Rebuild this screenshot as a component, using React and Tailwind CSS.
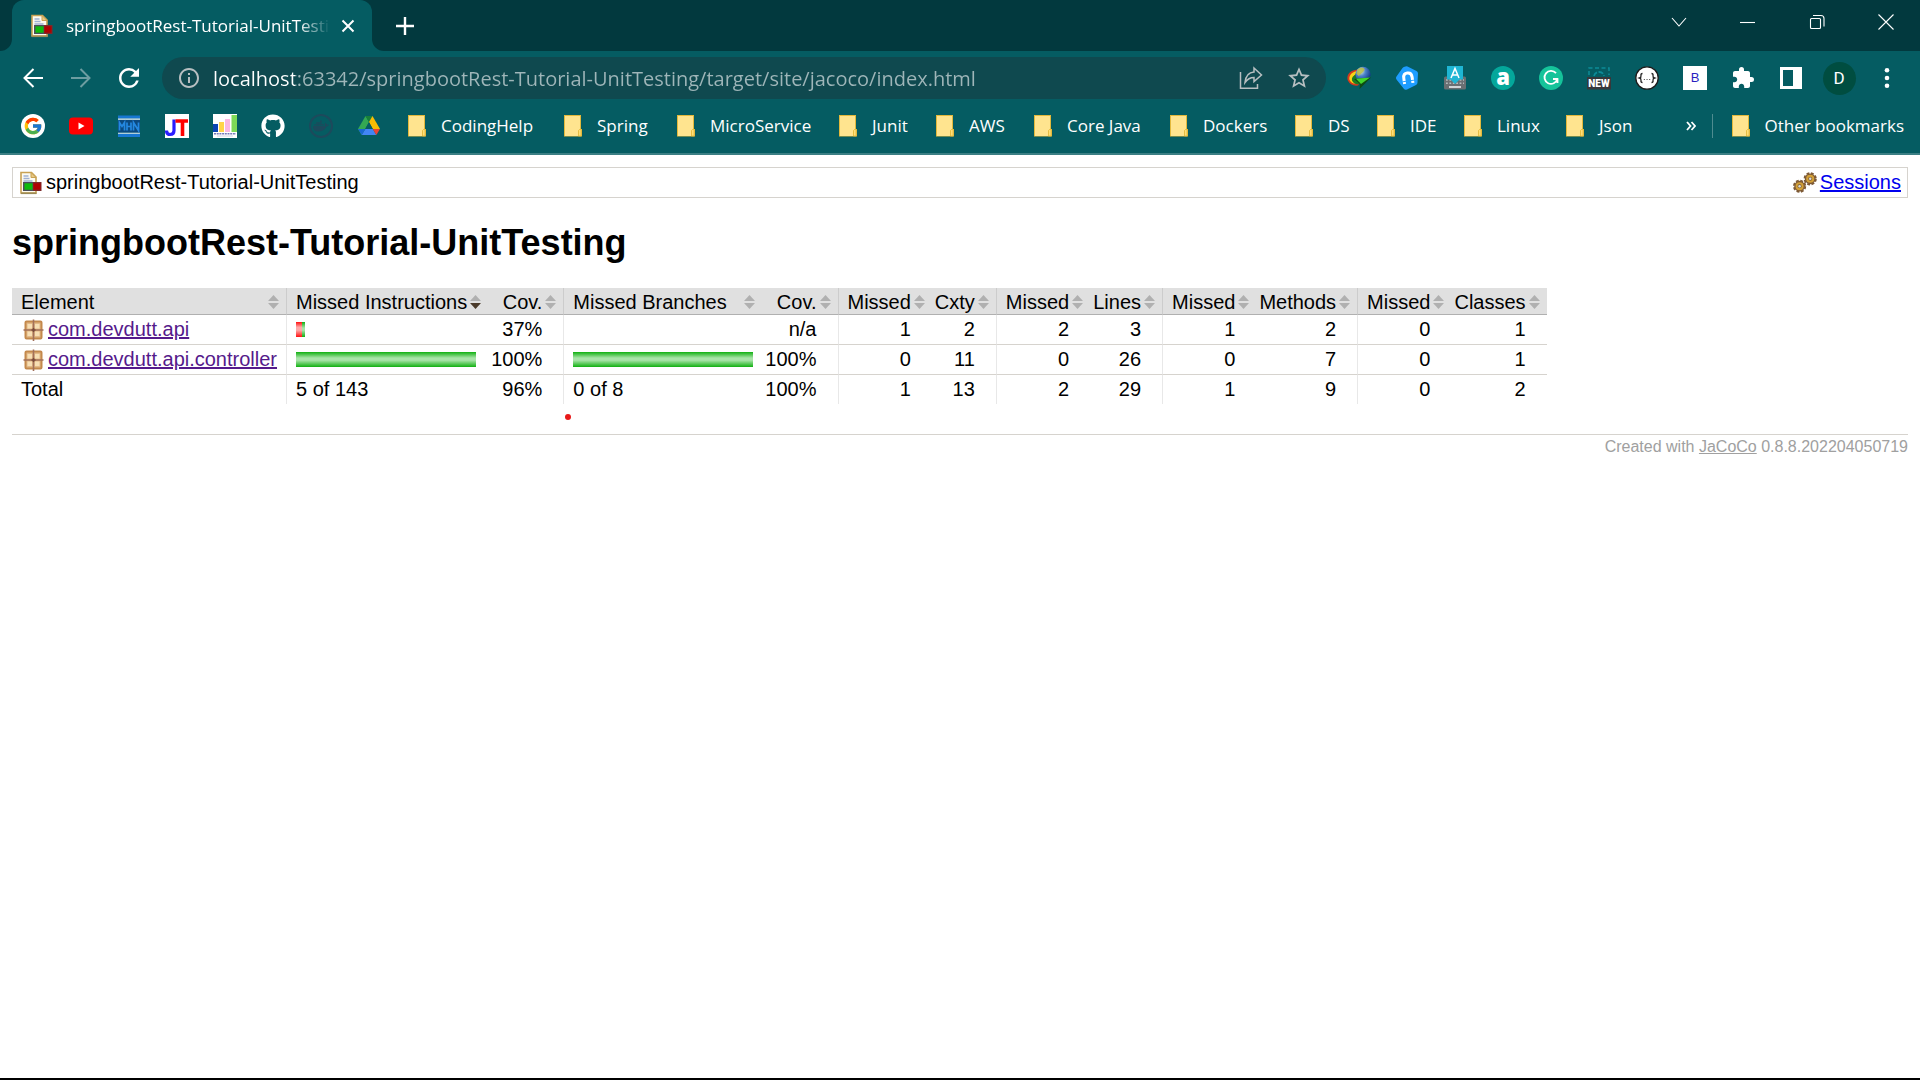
import { FaDocker, FaGithub } from "react-icons/fa";
import { FcGoogle } from "react-icons/fc";
import { MdExtension, MdInfoOutline, MdRefresh, MdStarBorder } from "react-icons/md";

/* ---------- icons ---------- */

function ReportIcon({ className }) {
  return (
    <svg viewBox="0 0 24 24" className={className} aria-hidden="true">
      <path d="M2 1.500h10.500l4.500 4.500v16H2z" fill="#fdfbf1" stroke="#c9a253" strokeWidth="1.600" />
      <path d="M12 1.500v5h5z" fill="#e9c983" stroke="#c9a253" strokeWidth="1" />
      <path d="M4.500 5h5M4.500 7.500h6M4.500 10h9" stroke="#9fb1d3" strokeWidth="1.300" />
      <path d="M2 22.300h15.500" stroke="#9b8a55" strokeWidth="1.600" />
      <rect x="4" y="11" width="10.500" height="9" fill="#4a4f5a" />
      <rect x="14" y="11" width="8.500" height="9" fill="#7d2a2a" />
      <rect x="5.500" y="12.300" width="8" height="6.400" fill="#0dbb0d" />
      <rect x="14.500" y="12.300" width="7" height="6.400" fill="#b00000" />
    </svg>
  );
}

function PackageIcon() {
  return (
    <svg viewBox="0 0 24 24" className="size-6 shrink-0" aria-hidden="true">
      <rect x="4.500" y="3.500" width="16" height="17" rx="1" fill="#e3b987" stroke="#c4894c" strokeWidth="2" />
      <path d="M6.500 6h4.500v4.500H6.500zM14 6h4.500v4.500H14zM6.500 13.500h4.500V18H6.500zM14 13.500h4.500V18H14z" fill="#f7dfb4" />
      <path d="M12.500 1.500v21.500M2.500 12h20" stroke="#a2705a" strokeWidth="1.600" />
      <path d="M10.500 12h4M12.500 10v4" stroke="#7a4c3a" strokeWidth="1.600" />
    </svg>
  );
}

function Gear({ cx, cy }) {
  return (
    <g transform={`translate(${cx} ${cy})`}>
      <circle r="5.700" fill="none" stroke="#7d5a36" strokeWidth="1.800" strokeDasharray="2.900 1.577" />
      <circle r="4.700" fill="#d3a037" stroke="#7d5730" strokeWidth="1.300" />
      <circle r="2.100" fill="#8c6a3a" />
      <circle r="1.200" fill="#dcdcdc" />
    </g>
  );
}

function SessionsIcon() {
  return (
    <svg viewBox="0 0 24 24" className="size-6" aria-hidden="true">
      <Gear cx={6.6} cy={15.2} />
      <Gear cx={17.2} cy={7.8} />
    </svg>
  );
}

function SortIcon({ active }) {
  return (
    <svg viewBox="0 0 11 14" className="h-3.5 w-[11px] shrink-0" aria-hidden="true">
      <path d="M5.500 0L11 6H0z" fill="#b0b0b0" />
      <path d="M0 8h11l-5.500 6z" fill={active ? "#4a3a2a" : "#b0b0b0"} />
    </svg>
  );
}

function FolderIcon() {
  return (
    <svg viewBox="0 0 18 22" className="h-[22px] w-[18px] shrink-0" aria-hidden="true">
      <path d="M0 0h17v14h1v7.500H0z" fill="#e3b93c" />
      <path d="M1 1h15v13l-2 2v5H1z" fill="#ffe48f" />
      <path d="M14.500 21v-5.500l1-1h1.500V21z" fill="#ffdf78" stroke="#e3b93c" strokeWidth="0.800" />
    </svg>
  );
}

function YouTubeIcon() {
  return (
    <svg viewBox="0 0 24 24" className="size-6" aria-hidden="true">
      <rect x="0" y="3.500" width="24" height="17" rx="4" fill="#f00" />
      <path d="M9.500 8.500v7l6-3.500z" fill="#fff" />
    </svg>
  );
}

function MknIcon() {
  return (
    <svg viewBox="0 0 24 24" className="size-6" aria-hidden="true">
      <path d="M1 1.500h22v3H1zM1 20h22v3H1z" fill="#1777d1" />
      <path d="M1 5.200h22M1 19.200h22" stroke="#e8f4ff" strokeWidth="1.200" />
      <rect x="1" y="6" width="22" height="12.500" fill="#0b4a80" />
      <path d="M2.500 16.500V8.500l2.500 4 2.500-4v8M10 8.500v8M14 8.500v8M10 12.500h4M16.500 16.500V8.500l5 8V8.500" fill="none" stroke="#2488e0" strokeWidth="1.700" />
    </svg>
  );
}

function JtIcon() {
  return (
    <svg viewBox="0 0 24 24" className="size-6" aria-hidden="true">
      <path d="M0 0h24v24H0z" fill="#fff" />
      <path d="M9 5.500v11q0 4-4 4-3.500 0-3.500-4" fill="none" stroke="#2a1cff" strokeWidth="3.200" />
      <path d="M10.500 7H23M17.500 7v15" stroke="#f00" strokeWidth="3.600" />
    </svg>
  );
}

function ChartIcon() {
  return (
    <svg viewBox="0 0 24 24" className="size-6" aria-hidden="true">
      <path d="M0 0h24v24H0z" fill="#fff" />
      <path d="M0 10h5v8H0z" fill="#0b45b5" />
      <path d="M6 8h5v10H6z" fill="#ffd54a" />
      <path d="M12 5h5v13h-5z" fill="#fbb8e4" />
      <path d="M18.500 1H24v17h-5.500z" fill="#7ed957" />
      <path d="M1 19.800h22" stroke="#7478b8" strokeWidth="1.400" strokeDasharray="2 0.700" />
      <path d="M4 22h16" stroke="#c4c6dd" strokeWidth="0.800" />
    </svg>
  );
}

function DriveIcon() {
  return (
    <svg viewBox="0 0 24 24" className="size-6" aria-hidden="true">
      <path d="M8.500 2L12 8 4.700 21 1 15z" fill="#34a853" />
      <path d="M8.500 2h7L12 8z" fill="#188038" />
      <path d="M15.500 2L23 15h-7.200L12 8z" fill="#fbbc04" />
      <path d="M8.300 15h7.500l3.500 6H4.700z" fill="#4285f4" />
      <path d="M1 15h7.300l-3.600 6z" fill="#1967d2" />
      <path d="M15.800 15H23l-3.700 6z" fill="#ea4335" />
      <path d="M8.300 15L12 8.200l3.800 6.800z" fill="#055c62" />
    </svg>
  );
}

function IdmIcon() {
  return (
    <svg viewBox="0 0 24 24" className="size-6" aria-hidden="true">
      <defs>
        <radialGradient id="globe" cx="0.350" cy="0.300" r="0.700">
          <stop offset="0" stopColor="#e8f4d0" />
          <stop offset="0.450" stopColor="#4d82cc" />
          <stop offset="1" stopColor="#123a86" />
        </radialGradient>
      </defs>
      <path d="M12 3.500C3 3.500-1 9 .8 14.500q3 6 10.200 5l3-4q-8 .5-8-4t6-5z" fill="#d33a1c" />
      <path d="M12 5C5 5 1.500 9.500 2.500 14q3 5 9 3.500l1-3q-7-.5-5-5t5-3z" fill="#f7d417" />
      <path d="M10 8q-6 2-5 6.500Q7 19 12.500 18l0-3q-5-1-2.500-7z" fill="#1c7a24" />
      <circle cx="16" cy="8.300" r="7.600" fill="url(#globe)" />
      <path d="M10.500 3.500q3.500-3 6-1.500t-1 4.500-3.500 3.500-2.500-2z" fill="#b9bd45" opacity="0.850" />
      <path d="M7 13l17-1.500-11.500 11.500.5-5z" fill="#0d4a12" />
      <path d="M9 12.800l14-1.300-9 6.500z" fill="#42d52c" />
    </svg>
  );
}

function MagnetIcon() {
  return (
    <svg viewBox="0 0 24 24" className="size-6" aria-hidden="true">
      <path d="M10.500.500Q12 0 13.500 1l8 4q1.500.8 1.500 2.500l-.5 9q0 1.500-1.500 2.500l-9 4.500q-2 .8-3-.5L1.500 13.500q-1-1.500 0-3l6-8.500q1-1.200 3-1.500z" fill="#1e9dff" />
      <g transform="rotate(-8 13 12)" fill="none">
        <path d="M8.800 17.500V11.500q0-4.500 4.200-4.500t4.200 4.500v6" stroke="#fff" strokeWidth="3" />
        <path d="M7 15h4M15.400 15h4" stroke="#1e9dff" strokeWidth="0.900" />
      </g>
    </svg>
  );
}

function KeyboardIcon() {
  return (
    <svg viewBox="0 0 24 24" className="size-6" aria-hidden="true">
      <rect x="1" y="10.500" width="22" height="13" rx="1.500" fill="#6a6f72" />
      <path d="M3 14h18M3 17.200h18" stroke="#b4b9bb" strokeWidth="1.600" strokeDasharray="1.800 1.600" />
      <path d="M6 21h12" stroke="#dde0e1" strokeWidth="1.800" />
      <path d="M4 0h16v13.500h-3.500L12 18l-4.500-4.500H4z" fill="#1fb6d4" />
      <path d="M8 12l4-9.500 4 9.500M9.400 9h5.200" fill="none" stroke="#fff" strokeWidth="1.500" />
    </svg>
  );
}

function NewShotIcon() {
  return (
    <svg viewBox="0 0 24 24" className="size-6" aria-hidden="true">
      <path d="M2 9V2h20v7" fill="none" stroke="#0d8b97" strokeWidth="1.500" strokeDasharray="4 2.500" />
      <path d="M7 10q1-4 5-4t5 4" fill="none" stroke="#0d8b97" strokeWidth="1.800" strokeDasharray="5 1.500" />
      <path d="M0 11h24v12.500H0z" fill="#37383b" />
      <text x="12" y="21" textAnchor="middle" fontSize="10" fontWeight="900" fill="#fff" fontFamily="Roboto, sans-serif">NEW</text>
    </svg>
  );
}

function JsonIcon() {
  return (
    <svg viewBox="0 0 24 24" className="size-6" aria-hidden="true">
      <circle cx="12" cy="12" r="11.200" fill="#fff" stroke="#1b1b1b" strokeWidth="1.300" />
      <path d="M7.500 7.500q-1.800 0-1.500 2t-1.500 2.500Q6.300 12.500 6 14.500t1.500 2M16.500 7.500q1.800 0 1.500 2t1.500 2.500q-1.800.500-1.500 2.500t-1.500 2" fill="none" stroke="#222" strokeWidth="1.300" />
      <path d="M8.800 13.500h1.100M11.500 13.500h1.100M14.100 13.500h1.100" stroke="#555" strokeWidth="1.100" />
    </svg>
  );
}

function GrammarlyIcon() {
  return (
    <svg viewBox="0 0 24 24" className="size-6" aria-hidden="true">
      <circle cx="12" cy="12" r="12" fill="#15c39a" />
      <path d="M17 7.200A6.500 6.500 0 1 0 18.300 13H14M18.500 13v4" fill="none" stroke="#fff" strokeWidth="1.800" />
    </svg>
  );
}

function SidePanelIcon() {
  return (
    <svg viewBox="0 0 24 24" className="size-6" aria-hidden="true">
      <path fillRule="evenodd" d="M1 1h22v22H1zM4 4v16h10V4z" fill="#fff" />
    </svg>
  );
}

function ShareIcon() {
  return (
    <svg viewBox="0 0 24 24" className="size-6" aria-hidden="true" fill="none" stroke="#b7bfc1" strokeWidth="1.500">
      <path d="M1.500 6v16.300h17V18" />
      <path d="M15 2l7.500 7-7.500 6.500v-4q-5.500 0-9 5Q7 6.500 15 6z" />
    </svg>
  );
}

/* ---------- browser window ---------- */

function WindowControls() {
  const items = [
    ["Search tabs", <path key="p" d="M1 4l7 8 7-8" />],
    ["Minimize", <path key="p" d="M0 8.500h15" />],
    ["Restore", <path key="p" d="M2.500 4.500h8q1 0 1 1v8q0 1-1 1h-8q-1 0-1-1v-8q0-1 1-1zM4 1.500h8q3 0 3 3v8" />],
    ["Close", <path key="p" d="M.5.5l15 15M15.500.5l-15 15" />],
  ];
  return (
    <div className="flex items-start">
      {items.map(([label, shape]) => (
        <button key={label} type="button" aria-label={label} className="flex h-[43px] w-[69px] items-center justify-center">
          <svg viewBox="0 0 16 16" className="size-4" fill="none" stroke="#fff" strokeWidth="1.100">{shape}</svg>
        </button>
      ))}
    </div>
  );
}

function TabStrip() {
  return (
    <div className="flex h-[51px] items-stretch bg-[#02393e]">
      <div className="w-3 bg-[#055c62]"><div className="h-full rounded-br-xl bg-[#02393e]" /></div>
      <div className="flex w-[360px] items-center rounded-t-xl bg-[#055c62] pl-[18px]">
        <ReportIcon className="size-6 shrink-0" />
        <span className="ml-3 w-[264px] overflow-hidden text-[17px] leading-6 whitespace-nowrap text-white [mask-image:linear-gradient(to_right,#000_88%,transparent)]">
          springbootRest-Tutorial-UnitTesting
        </span>
        <button type="button" aria-label="Close tab" className="ml-1.5 flex size-6 items-center justify-center">
          <svg viewBox="0 0 14 14" className="size-3.5" stroke="#fff" strokeWidth="2"><path d="M1.500 1.500l11 11M12.500 1.500l-11 11" /></svg>
        </button>
      </div>
      <div className="flex flex-1 bg-[#055c62]">
        <div className="flex flex-1 items-center rounded-bl-xl bg-[#02393e] pl-[21px]">
          <button type="button" aria-label="New tab" className="flex size-6 items-center justify-center">
            <svg viewBox="0 0 18 18" className="size-[18px]" stroke="#fff" strokeWidth="2.400"><path d="M9 0v18M0 9h18" /></svg>
          </button>
          <div className="ml-auto self-start"><WindowControls /></div>
        </div>
      </div>
    </div>
  );
}

const extensions = [
  ["Download manager", <IdmIcon />],
  ["Magnet", <MagnetIcon />],
  ["Input tools", <KeyboardIcon />],
  ["a", <span className="flex size-6 items-center justify-center rounded-full bg-[#04a79b] pb-1 font-['Open_Sans'] text-[22px] leading-6 font-extrabold text-white">a</span>],
  ["Grammarly", <GrammarlyIcon />],
  ["Screenshot", <NewShotIcon />],
  ["JSON viewer", <JsonIcon />],
  ["B", <span className="flex size-6 items-center justify-center bg-white font-['Liberation_Sans'] text-[13px] leading-6 text-[#2a1fc0]">B</span>],
  ["Extensions", <MdExtension className="size-6 text-white" />],
  ["Side panel", <SidePanelIcon />],
  ["Profile D", <span className="flex size-[33px] items-center justify-center rounded-full bg-[#004d40] font-[Roboto] text-[17px] leading-6 text-white">D</span>],
];

function Toolbar() {
  return (
    <div className="flex h-[54px] items-center bg-[#055c62] px-[9px]">
      <button type="button" aria-label="Back" className="flex h-10 w-12 items-center justify-center">
        <svg viewBox="0 0 20 20" className="size-5" fill="none" stroke="#fff" strokeWidth="2"><path d="M20 10H1.500M10.500 1L1.500 10l9 9" /></svg>
      </button>
      <button type="button" aria-label="Forward" className="flex h-10 w-12 items-center justify-center">
        <svg viewBox="0 0 20 20" className="size-5" fill="none" stroke="#6d9da1" strokeWidth="2"><path d="M0 10h18.500M9.500 1l9 9-9 9" /></svg>
      </button>
      <button type="button" aria-label="Reload" className="flex h-10 w-12 items-center justify-center">
        <MdRefresh className="size-[30px] text-white" />
      </button>
      <div className="ml-[9px] flex h-[42px] flex-1 items-center rounded-full bg-[#0f494f] pr-[3px] pl-[15px]">
        <MdInfoOutline className="size-6 shrink-0 text-[#b7bfc1]" aria-hidden="true" />
        <input
          type="text"
          aria-label="Address"
          defaultValue="localhost:63342/springbootRest-Tutorial-UnitTesting/target/site/jacoco/index.html"
          className="ml-3 h-8 min-w-0 flex-1 bg-[linear-gradient(to_right,#fff_82px,#9fb6b9_82px)] bg-clip-text text-[20px] text-transparent outline-none"
        />
        <button type="button" aria-label="Share" className="flex h-8 w-12 items-center justify-center"><ShareIcon /></button>
        <button type="button" aria-label="Bookmark this page" className="flex h-8 w-12 items-center justify-center">
          <MdStarBorder className="size-[26px] text-[#b7bfc1]" />
        </button>
      </div>
      <div className="ml-[9px] flex items-center">
        {extensions.map(([label, icon]) => (
          <button key={label} type="button" aria-label={label} className="flex h-10 w-12 items-center justify-center">{icon}</button>
        ))}
        <button type="button" aria-label="Menu" className="flex h-10 w-12 items-center justify-center">
          <svg viewBox="0 0 6 20" className="h-5 w-1.5" fill="#fff"><circle cx="3" cy="2.300" r="2.300" /><circle cx="3" cy="10" r="2.300" /><circle cx="3" cy="17.700" r="2.300" /></svg>
        </button>
      </div>
    </div>
  );
}

const siteBookmarks = [
  ["Google", <span className="flex size-6 items-center justify-center rounded-full bg-white"><FcGoogle className="size-5" /></span>],
  ["YouTube", <YouTubeIcon />],
  ["MKN", <MknIcon />],
  ["JT", <JtIcon />],
  ["Charts", <ChartIcon />],
  ["GitHub", <FaGithub className="size-6 text-white" />],
  ["Docker", <span className="flex size-6 items-center justify-center rounded-full border-2 border-[#1d4a5c]"><FaDocker className="size-4 text-[#1d4a5c]" /></span>],
  ["Drive", <DriveIcon />],
];

const folders = [
  ["CodingHelp", "w-[156px]"],
  ["Spring", "w-[113px]"],
  ["MicroService", "w-[162px]"],
  ["Junit", "w-[97px]"],
  ["AWS", "w-[98px]"],
  ["Core Java", "w-[136px]"],
  ["Dockers", "w-[125px]"],
  ["DS", "w-[82px]"],
  ["IDE", "w-[87px]"],
  ["Linux", "w-[102px]"],
  ["Json", "w-[82px]"],
];

function BookmarksBar() {
  return (
    <div className="flex h-[50px] items-center border-b-2 border-[#3b7f84] bg-[#055c62] pr-4 pb-1.5 pl-[9px] text-[17px] leading-6 text-white">
      {siteBookmarks.map(([label, icon]) => (
        <a key={label} href="#" aria-label={label} className="flex h-8 w-12 shrink-0 items-center justify-center">{icon}</a>
      ))}
      <div className="ml-[15px] flex">
        {folders.map(([label, width]) => (
          <button key={label} type="button" className={`flex shrink-0 items-center gap-[15px] whitespace-nowrap ${width}`}>
            <FolderIcon />
            {label}
          </button>
        ))}
      </div>
      <button type="button" aria-label="More bookmarks" className="ml-auto flex size-6 items-center justify-center">
        <svg viewBox="0 0 10 10" className="size-2.5" fill="none" stroke="#fff" strokeWidth="1.800"><path d="M1 1l3.500 4L1 9M5.500 1L9 5 5.500 9" /></svg>
      </button>
      <span className="mr-[19px] ml-[9px] h-6 w-px bg-[#4f8c90]" />
      <button type="button" className="flex items-center gap-3.5 whitespace-nowrap">
        <FolderIcon />
        Other bookmarks
      </button>
    </div>
  );
}

/* ---------- coverage report ---------- */

const headers = [
  { label: "Element", kind: "name" },
  { label: "Missed Instructions", kind: "bar", active: true },
  { label: "Cov.", kind: "end" },
  { label: "Missed Branches", kind: "bar" },
  { label: "Cov.", kind: "end" },
  { label: "Missed", kind: "start" },
  { label: "Cxty", kind: "end" },
  { label: "Missed", kind: "start" },
  { label: "Lines", kind: "end" },
  { label: "Missed", kind: "start" },
  { label: "Methods", kind: "end" },
  { label: "Missed", kind: "start" },
  { label: "Classes", kind: "end" },
];

const headerCell = {
  name: "pl-[9px]",
  bar: "border-l border-l-[#cccccc] pl-[9px]",
  start: "border-l border-l-[#cccccc] pl-[9px]",
  end: "pl-[3px]",
};

const bodyCell = {
  start: "border-l border-l-[#e8e8e8] pl-[9px] pr-[21px] text-right",
  end: "pl-[3px] pr-[21px] text-right",
};

const rows = [
  { name: "com.devdutt.api", instr: [6, 3], instrCov: "37%", branch: [0, 0], branchCov: "n/a", values: [1, 2, 2, 3, 1, 2, 0, 1] },
  { name: "com.devdutt.api.controller", instr: [0, 180], instrCov: "100%", branch: [0, 180], branchCov: "100%", values: [0, 11, 0, 26, 0, 7, 0, 1] },
];

const totals = [1, 13, 2, 29, 1, 9, 0, 2];

function Bar({ parts }) {
  return (
    <div className="mb-px flex h-[15px]">
      <div className="h-full bg-[linear-gradient(#ff1010,#ffa8a8_35%,#ffa8a8_55%,#ff1010)]" style={{ width: parts[0] }} />
      <div className="h-full bg-[linear-gradient(#10b010,#a8e4a8_40%,#a8e4a8_55%,#10b010)]" style={{ width: parts[1] }} />
    </div>
  );
}

function Numbers({ values }) {
  return values.map((value, i) => (
    <td key={i} className={i % 2 === 0 ? bodyCell.start : bodyCell.end}>{value}</td>
  ));
}

function CoverageTable() {
  return (
    <table className="border-separate border-spacing-0 whitespace-nowrap">
      <thead>
        <tr className="h-[27px] bg-[#e0e0e0]">
          {headers.map(({ label, kind, active }, i) => (
            <th key={i} scope="col" className={`border-b border-b-[#b0b0b0] pt-0.5 pr-[7px] font-normal ${headerCell[kind]}`}>
              <button type="button" className={`flex w-full items-center gap-[3px] ${kind === "end" || kind === "start" ? "justify-end" : "justify-between"}`}>
                {label}
                <SortIcon active={active} />
              </button>
            </th>
          ))}
        </tr>
      </thead>
      <tbody>
        {rows.map((row) => (
          <tr key={row.name} className="h-[30px] [&>td]:border-b [&>td]:border-b-[#d6d3ce]">
            <td className="px-[9px]">
              <div className="flex items-center gap-[3px]">
                <PackageIcon />
                <a href="#" className="text-[#551a8b] underline">{row.name}</a>
              </div>
            </td>
            <td className="border-l border-l-[#e8e8e8] px-[9px]"><Bar parts={row.instr} /></td>
            <td className={bodyCell.end}>{row.instrCov}</td>
            <td className="border-l border-l-[#e8e8e8] px-[9px]"><Bar parts={row.branch} /></td>
            <td className={bodyCell.end}>{row.branchCov}</td>
            <Numbers values={row.values} />
          </tr>
        ))}
      </tbody>
      <tfoot>
        <tr className="h-[29px]">
          <td className="px-[9px]">Total</td>
          <td className="border-l border-l-[#e8e8e8] px-[9px]">5 of 143</td>
          <td className={bodyCell.end}>96%</td>
          <td className="border-l border-l-[#e8e8e8] px-[9px]">0 of 8</td>
          <td className={bodyCell.end}>100%</td>
          <Numbers values={totals} />
        </tr>
      </tfoot>
    </table>
  );
}

function Report() {
  return (
    <main className="relative flex-1 px-3 pt-3 font-['Liberation_Sans',Arial,sans-serif] text-[20px] leading-[23px] text-black">
      <nav aria-label="Breadcrumb" className="flex h-[31px] items-center justify-between border border-[#d6d3ce] px-1.5">
        <span className="flex items-center gap-[3px]">
          <ReportIcon className="size-6" />
          springbootRest-Tutorial-UnitTesting
        </span>
        <span className="flex items-center gap-[3px]">
          <SessionsIcon />
          <a href="#" className="text-[#0000ee] underline">Sessions</a>
        </span>
      </nav>
      <h1 className="mt-6 mb-6 text-[36px] leading-[42px] font-bold">springbootRest-Tutorial-UnitTesting</h1>
      <CoverageTable />
      <span className="absolute top-[259px] left-[565px] size-1.5 rounded-full bg-[#e81919]" />
      <footer className="mt-[30px] border-t border-[#d6d3ce] pt-0.5 text-right text-[16px] leading-5 text-[#a0a0a0]">
        Created with <a href="#" className="underline">JaCoCo</a> 0.8.8.202204050719
      </footer>
    </main>
  );
}

export default function App() {
  return (
    <div className="flex min-h-screen flex-col border-b-2 border-black bg-white font-['Open_Sans','Noto_Sans',sans-serif]">
      <header>
        <TabStrip />
        <Toolbar />
        <BookmarksBar />
      </header>
      <Report />
    </div>
  );
}
